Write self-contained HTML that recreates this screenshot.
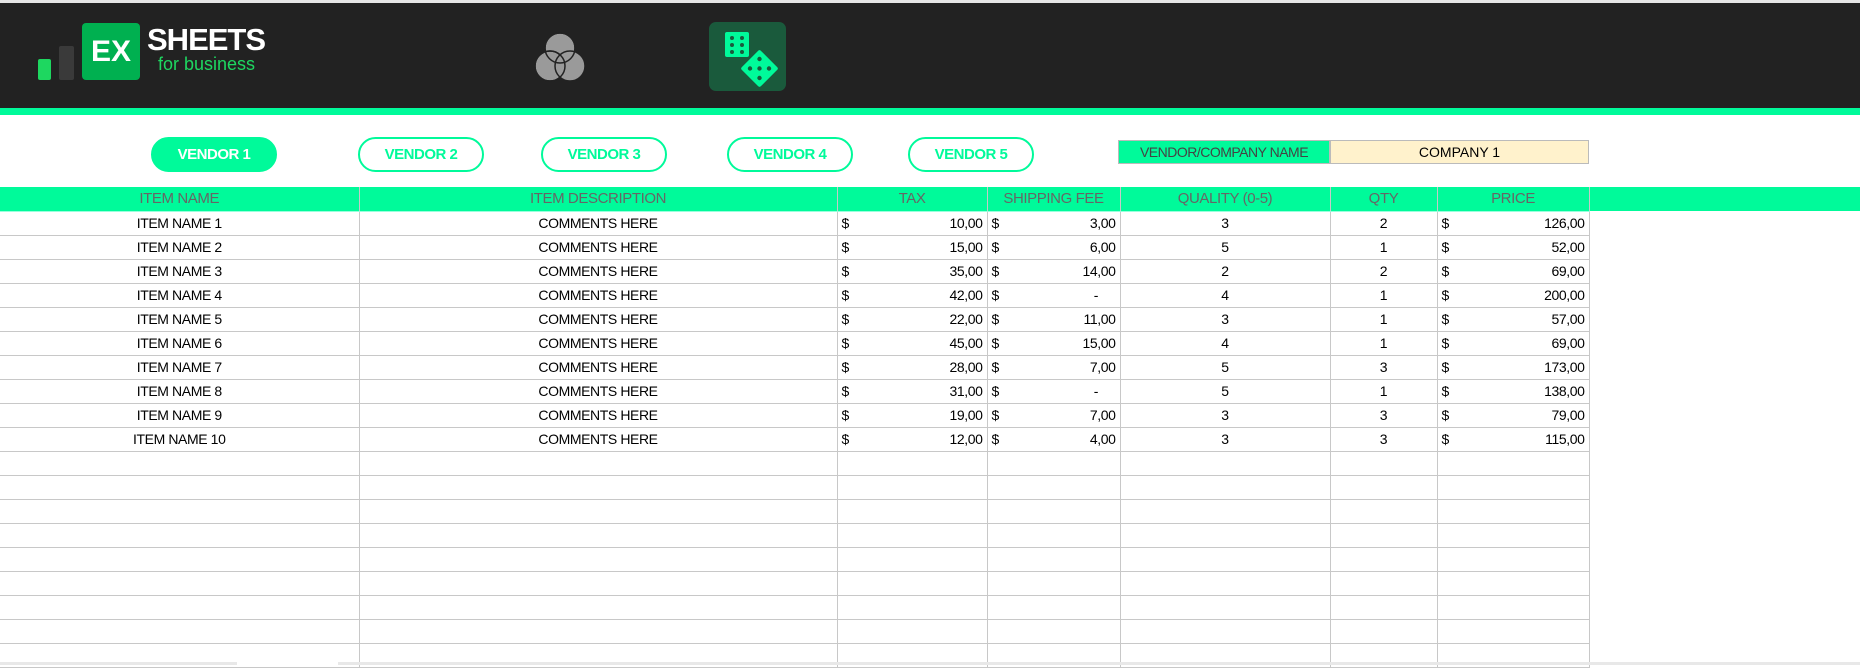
<!DOCTYPE html>
<html><head><meta charset="utf-8"><style>
*{margin:0;padding:0;box-sizing:border-box}
body{width:1860px;height:665px;overflow:hidden;background:#fff;font-family:"Liberation Sans",sans-serif;position:relative}
.a{position:absolute}
.top{left:0;top:0;width:1860px;height:3px;background:#e6e6e6}
.dark{left:0;top:3px;width:1860px;height:105px;background:#222}
.gbar{left:0;top:108px;width:1860px;height:7px;background:#00fa9a}
.btn{top:137px;height:35px;width:126px;border:2px solid #00fa9a;border-radius:18px;color:#00fa9a;font-weight:bold;font-size:15px;letter-spacing:-0.5px;display:flex;align-items:center;justify-content:center;background:#fff}
.btn.on{background:#00fa9a;color:#fff}
table{position:absolute;left:0;top:187px;border-collapse:collapse;table-layout:fixed;font-size:14px;letter-spacing:-0.4px}
td{height:24px;border-right:1px solid #c8c8c8;border-bottom:1px solid #c8c8c8;text-align:center;color:#000;white-space:nowrap;padding:0 4px}
tr.h td{background:#00fa9a;color:#666;font-weight:normal;font-size:15px;border-bottom:1px solid #9fd}
td.m{text-align:right}
td.m span{float:left}
</style></head><body>
<div class="a top"></div>
<div class="a dark"></div>
<div class="a gbar"></div>
<div class="a" style="left:38px;top:59px;width:13px;height:21px;background:#1ed760;border-radius:2px"></div>
<div class="a" style="left:59px;top:46px;width:15px;height:34px;background:#3a3a3a;border-radius:2px"></div>
<div class="a" style="left:82px;top:23px;width:58px;height:57px;background:#00b050;border-radius:4px;color:#fff;font:bold 30px 'Liberation Sans',sans-serif;display:flex;align-items:center;justify-content:center">EX</div>
<div class="a" style="left:147px;top:22px;color:#fff;font:bold 31px 'Liberation Sans',sans-serif;letter-spacing:-1px">SHEETS</div>
<div class="a" style="left:158px;top:54px;color:#1ed760;font:18px 'Liberation Sans',sans-serif">for business</div>
<svg class="a" style="left:532px;top:30px" width="56" height="54" viewBox="0 0 56 54"><g fill="#9a9a9a" stroke="#222" stroke-width="1.5"><circle cx="28" cy="18" r="15"/><circle cx="18" cy="36" r="15"/><circle cx="38" cy="36" r="15"/></g><g fill="none" stroke="#222" stroke-width="1.5"><circle cx="28" cy="18" r="15"/><circle cx="18" cy="36" r="15"/></g></svg>
<div class="a" style="left:709px;top:22px;width:77px;height:69px;background:#1a5a3c;border-radius:7px"></div>
<svg class="a" style="left:709px;top:22px" width="77" height="69" viewBox="0 0 77 69"><rect x="16" y="10" width="24" height="25" rx="2" fill="#00fa9a"/><g fill="#1a5a3c"><circle cx="23" cy="16" r="2"/><circle cx="33" cy="16" r="2"/><circle cx="23" cy="23" r="2"/><circle cx="33" cy="23" r="2"/><circle cx="23" cy="30" r="2"/><circle cx="33" cy="30" r="2"/></g><rect x="37" y="33" width="27" height="27" rx="2" fill="#00fa9a" transform="rotate(45 50.5 46.5)"/><g fill="#1a5a3c"><circle cx="50.5" cy="37" r="2.2"/><circle cx="41" cy="46.5" r="2.2"/><circle cx="50.5" cy="46.5" r="2.2"/><circle cx="60" cy="46.5" r="2.2"/><circle cx="50.5" cy="56" r="2.2"/></g></svg>
<div class="a btn on" style="left:151px">VENDOR 1</div>
<div class="a btn" style="left:358px">VENDOR 2</div>
<div class="a btn" style="left:541px">VENDOR 3</div>
<div class="a btn" style="left:727px">VENDOR 4</div>
<div class="a btn" style="left:908px">VENDOR 5</div>
<div class="a" style="left:1118px;top:140px;width:212px;height:24px;background:#00fa9a;border:1px solid #bbb;color:#444;font-size:14px;letter-spacing:-0.5px;line-height:22px;text-align:center">VENDOR/COMPANY NAME</div>
<div class="a" style="left:1330px;top:140px;width:259px;height:24px;background:#fff2cc;border:1px solid #bbb;font-size:14px;line-height:22px;text-align:center">COMPANY 1</div>
<div class="a" style="left:1589px;top:187px;width:271px;height:24px;background:#00fa9a"></div>
<table>
<colgroup><col style="width:359px"><col style="width:478px"><col style="width:150px"><col style="width:133px"><col style="width:210px"><col style="width:107px"><col style="width:152px"></colgroup>
<tr class="h"><td>ITEM NAME</td><td>ITEM DESCRIPTION</td><td>TAX</td><td>SHIPPING FEE</td><td>QUALITY (0-5)</td><td>QTY</td><td>PRICE</td></tr>
<tr><td>ITEM NAME 1</td><td>COMMENTS HERE</td><td class="m"><span>$</span>10,00</td><td class="m"><span>$</span>3,00</td><td>3</td><td>2</td><td class="m"><span>$</span>126,00</td></tr>
<tr><td>ITEM NAME 2</td><td>COMMENTS HERE</td><td class="m"><span>$</span>15,00</td><td class="m"><span>$</span>6,00</td><td>5</td><td>1</td><td class="m"><span>$</span>52,00</td></tr>
<tr><td>ITEM NAME 3</td><td>COMMENTS HERE</td><td class="m"><span>$</span>35,00</td><td class="m"><span>$</span>14,00</td><td>2</td><td>2</td><td class="m"><span>$</span>69,00</td></tr>
<tr><td>ITEM NAME 4</td><td>COMMENTS HERE</td><td class="m"><span>$</span>42,00</td><td class="m"><span>$</span>-&nbsp;&nbsp;&nbsp;&nbsp;&nbsp;</td><td>4</td><td>1</td><td class="m"><span>$</span>200,00</td></tr>
<tr><td>ITEM NAME 5</td><td>COMMENTS HERE</td><td class="m"><span>$</span>22,00</td><td class="m"><span>$</span>11,00</td><td>3</td><td>1</td><td class="m"><span>$</span>57,00</td></tr>
<tr><td>ITEM NAME 6</td><td>COMMENTS HERE</td><td class="m"><span>$</span>45,00</td><td class="m"><span>$</span>15,00</td><td>4</td><td>1</td><td class="m"><span>$</span>69,00</td></tr>
<tr><td>ITEM NAME 7</td><td>COMMENTS HERE</td><td class="m"><span>$</span>28,00</td><td class="m"><span>$</span>7,00</td><td>5</td><td>3</td><td class="m"><span>$</span>173,00</td></tr>
<tr><td>ITEM NAME 8</td><td>COMMENTS HERE</td><td class="m"><span>$</span>31,00</td><td class="m"><span>$</span>-&nbsp;&nbsp;&nbsp;&nbsp;&nbsp;</td><td>5</td><td>1</td><td class="m"><span>$</span>138,00</td></tr>
<tr><td>ITEM NAME 9</td><td>COMMENTS HERE</td><td class="m"><span>$</span>19,00</td><td class="m"><span>$</span>7,00</td><td>3</td><td>3</td><td class="m"><span>$</span>79,00</td></tr>
<tr><td>ITEM NAME 10</td><td>COMMENTS HERE</td><td class="m"><span>$</span>12,00</td><td class="m"><span>$</span>4,00</td><td>3</td><td>3</td><td class="m"><span>$</span>115,00</td></tr>
<tr><td></td><td></td><td></td><td></td><td></td><td></td><td></td></tr>
<tr><td></td><td></td><td></td><td></td><td></td><td></td><td></td></tr>
<tr><td></td><td></td><td></td><td></td><td></td><td></td><td></td></tr>
<tr><td></td><td></td><td></td><td></td><td></td><td></td><td></td></tr>
<tr><td></td><td></td><td></td><td></td><td></td><td></td><td></td></tr>
<tr><td></td><td></td><td></td><td></td><td></td><td></td><td></td></tr>
<tr><td></td><td></td><td></td><td></td><td></td><td></td><td></td></tr>
<tr><td></td><td></td><td></td><td></td><td></td><td></td><td></td></tr>
<tr><td></td><td></td><td></td><td></td><td></td><td></td><td></td></tr>
</table>
<div class="a" style="left:0;top:662px;width:237px;height:3px;background:#e8e8e8"></div>
<div class="a" style="left:338px;top:662px;width:1522px;height:3px;background:#e8e8e8"></div>
</body></html>
